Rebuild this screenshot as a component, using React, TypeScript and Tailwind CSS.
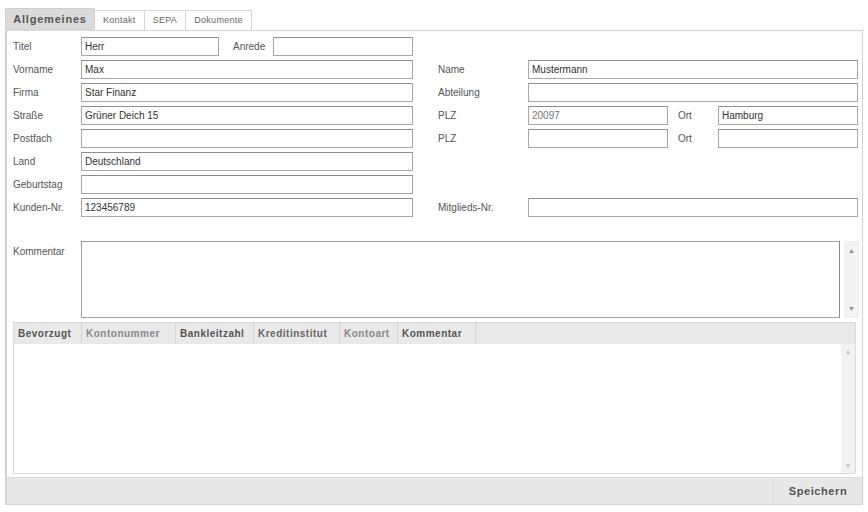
import React from 'react';

const Field = ({ value = '', className = '' }: { value?: string; className?: string }) => (
  <div
    className={`h-[19px] border border-[#a9a9a9] border-t-[#8f8f8f] bg-white px-[3px] text-[10px] leading-[17px] text-[#333] ${className}`}
  >
    {value}
  </div>
);

const Label = ({ text, className = 'w-[68px]' }: { text: string; className?: string }) => (
  <div className={`shrink-0 text-[10px] text-[#555] ${className}`}>{text}</div>
);

const Row = ({ children }: { children?: React.ReactNode }) => (
  <div className="flex h-[23px] items-center">{children}</div>
);

const tabs = ['Allgemeines', 'Kontakt', 'SEPA', 'Dokumente'];
const columns = [
  { title: 'Bevorzugt', w: 'w-[68px]', tone: 'text-[#555]' },
  { title: 'Kontonummer', w: 'w-[94px]', tone: 'text-[#888]' },
  { title: 'Bankleitzahl', w: 'w-[78px]', tone: 'text-[#555]' },
  { title: 'Kreditinstitut', w: 'w-[86px]', tone: 'text-[#666]' },
  { title: 'Kontoart', w: 'w-[58px]', tone: 'text-[#888]' },
  { title: 'Kommentar', w: 'w-[78px]', tone: 'text-[#555]' },
];

export default function App() {
  return (
    <div className="h-[512px] w-[868px] bg-white px-[5px] pt-[8px] font-['Liberation_Sans',Arial,sans-serif]">
      {/* tabs */}
      <div className="flex h-[22px] items-end">
        {tabs.map((t, i) =>
          i === 0 ? (
            <div
              key={t}
              className="flex h-[22px] w-[90px] items-center justify-center border border-b-0 border-[#cfcfcf] bg-[#dadada] text-[11px] font-bold tracking-[0.8px] text-[#555]"
            >
              {t}
            </div>
          ) : (
            <div
              key={t}
              className="flex h-[20px] items-center border border-b-0 border-l-0 border-[#d6d6d6] bg-white px-[8px] text-[9px] tracking-[0.3px] text-[#666]"
            >
              {t}
            </div>
          )
        )}
      </div>

      {/* panel */}
      <div className="flex h-[475px] flex-col border border-[#d4d4d4] border-l-2 bg-white">
        <div className="flex gap-[25px] pl-[6px] pt-[4px]">
          {/* left column */}
          <div className="w-[400px]">
            <Row>
              <Label text="Titel" className="w-[68px] text-[#333]" />
              <Field value="Herr" className="w-[138px]" />
              <Label text="Anrede" className="w-[54px] pl-[14px]" />
              <Field className="w-[140px]" />
            </Row>
            <Row>
              <Label text="Vorname" />
              <Field value="Max" className="flex-1" />
            </Row>
            <Row>
              <Label text="Firma" />
              <Field value="Star Finanz" className="flex-1" />
            </Row>
            <Row>
              <Label text="Straße" />
              <Field value="Grüner Deich 15" className="flex-1" />
            </Row>
            <Row>
              <Label text="Postfach" />
              <Field className="flex-1" />
            </Row>
            <Row>
              <Label text="Land" />
              <Field value="Deutschland" className="flex-1" />
            </Row>
            <Row>
              <Label text="Geburtstag" />
              <Field className="flex-1" />
            </Row>
            <Row>
              <Label text="Kunden-Nr." />
              <Field value="123456789" className="flex-1" />
            </Row>
          </div>

          {/* right column */}
          <div className="w-[420px]">
            <Row />
            <Row>
              <Label text="Name" className="w-[90px]" />
              <Field value="Mustermann" className="flex-1" />
            </Row>
            <Row>
              <Label text="Abteilung" className="w-[90px]" />
              <Field className="flex-1" />
            </Row>
            <Row>
              <Label text="PLZ" className="w-[90px]" />
              <Field value="20097" className="w-[140px] text-[#777]" />
              <Label text="Ort" className="w-[50px] pl-[10px]" />
              <Field value="Hamburg" className="w-[140px]" />
            </Row>
            <Row>
              <Label text="PLZ" className="w-[90px]" />
              <Field className="w-[140px]" />
              <Label text="Ort" className="w-[50px] pl-[10px]" />
              <Field className="w-[140px]" />
            </Row>
            <Row />
            <Row />
            <Row>
              <Label text="Mitglieds-Nr." className="w-[90px]" />
              <Field className="flex-1" />
            </Row>
          </div>
        </div>

        {/* Kommentar */}
        <div className="mt-[22px] flex pl-[6px]">
          <Label text="Kommentar" className="w-[68px] pt-[3px]" />
          <div className="h-[77px] w-[759px] border border-[#a0a0a0] border-r-[#8a8a8a] bg-white" />
          <div className="ml-[4px] flex h-[77px] w-[15px] flex-col items-center justify-between bg-[#f3f3f3] py-[6px] text-[7px] leading-none text-[#888]">
            <span>▲</span>
            <span>▼</span>
          </div>
        </div>

        {/* SEPA grid */}
        <div className="mx-[6px] mt-[4px] flex h-[152px] flex-col border border-[#d9d9d9]">
          <div className="flex h-[21px] shrink-0 items-center bg-[#e9e9e9]">
            {columns.map((c) => (
              <div
                key={c.title}
                className={`${c.w} ${c.tone} h-full border-r border-[#d6d6d6] pl-[4px] text-[10px] font-bold leading-[21px] tracking-[0.5px]`}
              >
                {c.title}
              </div>
            ))}
          </div>
          <div className="flex flex-1">
            <div className="flex-1 bg-white" />
            <div className="flex w-[14px] flex-col items-center justify-between bg-[#f2f2f2] py-[4px] text-[7px] leading-none text-[#c8c8c8]">
              <span>▲</span>
              <span>▼</span>
            </div>
          </div>
        </div>

        {/* bottom bar */}
        <div className="mt-[3px] flex flex-1 items-stretch justify-end border-t border-[#dcdcdc] bg-[#e8e8e8]">
          <div className="flex w-[89px] items-center justify-center border-l border-[#dadada] text-[11px] font-bold tracking-[0.6px] text-[#555]">
            Speichern
          </div>
        </div>
      </div>
    </div>
  );
}
